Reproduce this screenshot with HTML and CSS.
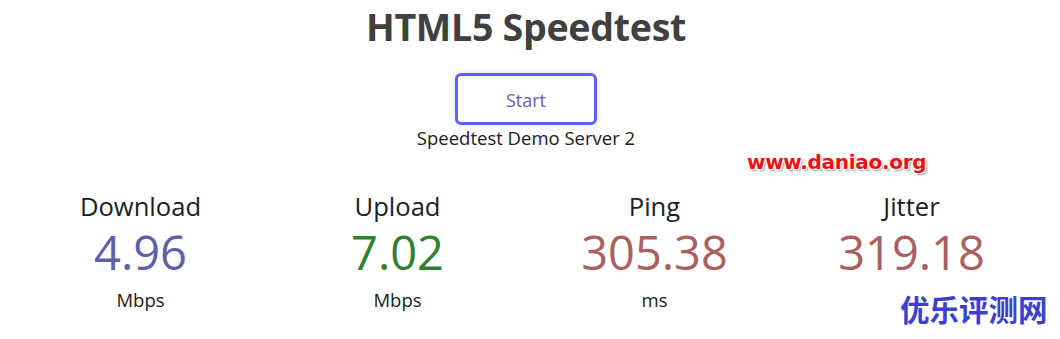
FILE: index.html
```html
<!DOCTYPE html>
<html>
<head>
<meta charset="utf-8">
<link rel="stylesheet" href="styles.css">
</head>
<body>
<div class="page">
  <h1 class="title">HTML5 Speedtest</h1>
  <div class="start-wrap"><div class="start-btn">Start</div></div>
  <div class="server">Speedtest Demo Server 2</div>
  <div class="tests">
    <div class="test">
      <div class="label">Download</div>
      <div class="value dl">4.96</div>
      <div class="unit">Mbps</div>
    </div>
    <div class="test">
      <div class="label">Upload</div>
      <div class="value ul">7.02</div>
      <div class="unit">Mbps</div>
    </div>
    <div class="test">
      <div class="label">Ping</div>
      <div class="value pg">305.38</div>
      <div class="unit">ms</div>
    </div>
    <div class="test">
      <div class="label">Jitter</div>
      <div class="value pg">319.18</div>
      <div class="unit">ms</div>
    </div>
  </div>
</div>
<div class="wm-url">www.daniao.org</div>
<div class="wm-cn">优乐评测网</div>
</body>
</html>
```
FILE: styles.css
```css
html, body { margin: 0; padding: 0; background: #fff; }
body {
  width: 1060px; height: 339px; overflow: hidden; position: relative;
  font-family: "Open Sans", "Noto Sans", sans-serif; color: #202020;
}
.page { width: 1028px; margin-left: 12px; text-align: center; }
.title {
  margin: 0; padding-top: 2px; font-size: 37.6px; font-weight: 700; color: #404040;
  line-height: 50px; letter-spacing: -0.3px;
}
.start-wrap { display: flex; justify-content: center; margin-top: 21px; }
.start-btn {
  width: 136px; height: 46px; border: 3px solid #6060ff; border-radius: 6px;
  box-shadow: 0 0 6px rgba(0,0,0,0.12);
  color: #6060aa; font-size: 18px; line-height: 48px;
}
.server { font-size: 18.5px; line-height: 24px; margin-top: 1px; color: #202020; }
.tests { display: grid; grid-template-columns: repeat(4, 1fr); margin-top: 40px; }
.label { font-size: 25.6px; line-height: 34px; color: #202020; }
.value { font-size: 47px; line-height: 56px; }
.dl { color: #6060aa; }
.ul { color: #308030; }
.pg { color: #aa6060; }
.unit { font-size: 18.5px; line-height: 24px; margin-top: 8px; color: #202020; }
.wm-url {
  position: absolute; left: 747px; top: 150px;
  font-family: "DejaVu Sans", sans-serif; font-weight: 700; font-size: 20px;
  color: #f01010; letter-spacing: -0.3px;
  text-shadow: 1px 1px 0 #fff, -1px -1px 0 #fff, 1px -1px 0 #fff, -1px 1px 0 #fff, 2px 2px 2px #999;
}
.wm-cn {
  position: absolute; left: 890px; top: 284px; padding: 4px 10px;
  font-family: "Noto Sans CJK SC", sans-serif; font-weight: 700; font-size: 29.5px;
  color: #3f3fcf; line-height: 40px; background: #fff;
}
```
